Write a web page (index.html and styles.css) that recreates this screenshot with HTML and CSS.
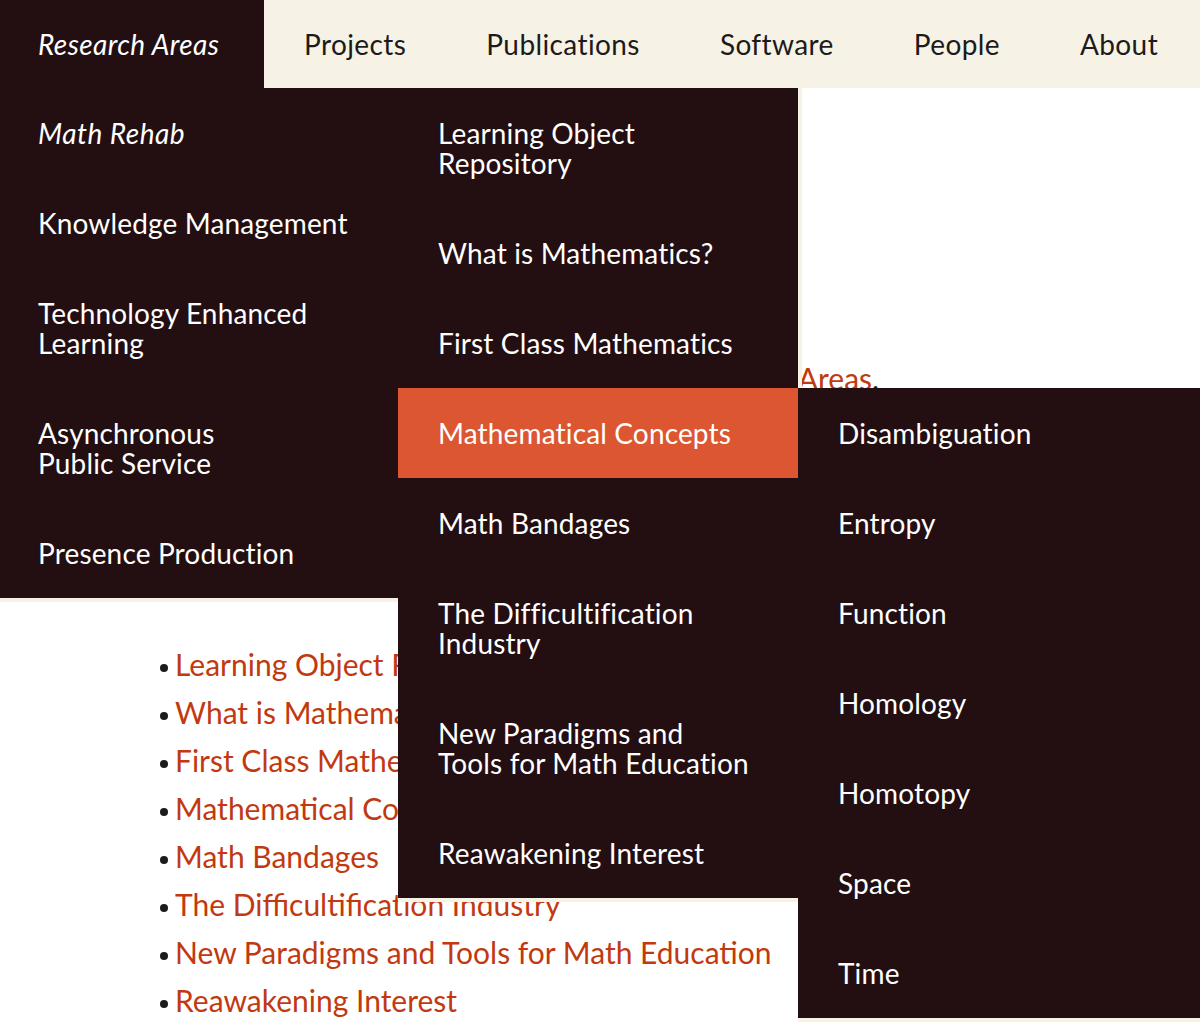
FILE: index.html
```html
<!DOCTYPE html>
<html lang="en">
<head>
<meta charset="utf-8">
<title>Math Rehab</title>
<link rel="stylesheet" href="styles.css">
</head>
<body>
<header class="site-header">
  <nav class="main-nav">
    <ul class="nav-list">
      <li class="nav-item is-open">
        <a class="nav-link current" href="#">Research Areas</a>
        <ul class="dropdown level-1">
          <li class="dd-item is-open">
            <a class="dd-link current" href="#">Math Rehab</a>
            <ul class="dropdown level-2">
              <li class="dd-item"><a class="dd-link" href="#">Learning Object<br>Repository</a></li>
              <li class="dd-item"><a class="dd-link" href="#">What is Mathematics?</a></li>
              <li class="dd-item"><a class="dd-link" href="#">First Class Mathematics</a></li>
              <li class="dd-item is-open">
                <a class="dd-link hover" href="#">Mathematical Concepts</a>
                <ul class="dropdown level-3">
                  <li class="dd-item"><a class="dd-link" href="#">Disambiguation</a></li>
                  <li class="dd-item"><a class="dd-link" href="#">Entropy</a></li>
                  <li class="dd-item"><a class="dd-link" href="#">Function</a></li>
                  <li class="dd-item"><a class="dd-link" href="#">Homology</a></li>
                  <li class="dd-item"><a class="dd-link" href="#">Homotopy</a></li>
                  <li class="dd-item"><a class="dd-link" href="#">Space</a></li>
                  <li class="dd-item"><a class="dd-link" href="#">Time</a></li>
                </ul>
              </li>
              <li class="dd-item"><a class="dd-link" href="#">Math Bandages</a></li>
              <li class="dd-item"><a class="dd-link" href="#">The Difficultification<br>Industry</a></li>
              <li class="dd-item"><a class="dd-link" href="#">New Paradigms and<br>Tools for Math Education</a></li>
              <li class="dd-item"><a class="dd-link" href="#">Reawakening Interest</a></li>
            </ul>
          </li>
          <li class="dd-item"><a class="dd-link" href="#">Knowledge Management</a></li>
          <li class="dd-item"><a class="dd-link" href="#">Technology Enhanced<br>Learning</a></li>
          <li class="dd-item"><a class="dd-link" href="#">Asynchronous<br>Public Service</a></li>
          <li class="dd-item"><a class="dd-link" href="#">Presence Production</a></li>
        </ul>
      </li>
      <li class="nav-item"><a class="nav-link" href="#">Projects</a></li>
      <li class="nav-item"><a class="nav-link" href="#">Publications</a></li>
      <li class="nav-item"><a class="nav-link" href="#">Software</a></li>
      <li class="nav-item"><a class="nav-link" href="#">People</a></li>
      <li class="nav-item"><a class="nav-link" href="#">About</a></li>
    </ul>
  </nav>
</header>
<main class="content">
  <h1 class="page-title">Math Rehab</h1>
  <p class="intro">Math Rehab is one of our <a href="#">Research</a> <a href="#">Areas</a>.</p>
  <ul class="topic-list">
    <li><a href="#">Learning Object Repository</a></li>
    <li><a href="#">What is Mathematics?</a></li>
    <li><a href="#">First Class Mathematics</a></li>
    <li><a href="#">Mathematical Concepts</a></li>
    <li><a href="#">Math Bandages</a></li>
    <li><a href="#">The Difficultification Industry</a></li>
    <li><a href="#">New Paradigms and Tools for Math Education</a></li>
    <li><a href="#">Reawakening Interest</a></li>
  </ul>
</main>
</body>
</html>
```
FILE: styles.css
```css
* { box-sizing: border-box; }
html, body {
  margin: 0;
  padding: 0;
  background: #ffffff;
}
body {
  font-family: "Lato", "Noto Sans", sans-serif;
  font-size: 28px;
  color: #1d1a1a;
  overflow: hidden;
  height: 1026px;
}
a { text-decoration: none; }
ul { list-style: none; margin: 0; padding: 0; }

.site-header {
  background: #f6f3e6;
  height: 88px;
  position: relative;
  z-index: 10;
}
.nav-list {
  display: flex;
  height: 88px;
}
.nav-item {
  position: relative;
}
.nav-link {
  display: block;
  height: 88px;
  line-height: 88px;
  padding: 0 40px 0 40px;
  color: #1d1a1a;
  white-space: nowrap;
  letter-spacing: 0.4px;
}
.nav-link.current {
  background: #230f12;
  color: #ffffff;
  font-style: italic;
  padding-left: 38px;
  width: 264px;
  letter-spacing: 0.4px;
}

.dropdown {
  position: absolute;
  background: #230f12;
  width: 400px;
  box-shadow: 4px 0 0 #f6f3e6, 0 4px 0 #f6f3e6;
}
.dropdown.level-1 {
  top: 88px;
  left: 0;
  width: 398px;
}
.dropdown.level-2,
.dropdown.level-3 {
  top: 0;
  left: 100%;
}
.dropdown.level-2 { width: 400px; }
.dropdown.level-3 { width: 402px; }

.dd-item { position: relative; }
.dd-link {
  display: block;
  padding: 30px 40px;
  line-height: 30px;
  color: #ffffff;
  white-space: nowrap;
  letter-spacing: 0.15px;
}
.level-1 > .dd-item > .dd-link { padding-left: 38px; }
.dd-link.current { font-style: italic; letter-spacing: 0.5px; }
.dd-link.hover { background: #dc5631; }

.content {
  padding: 0 0 0 160px;
  font-size: 30px;
}
.page-title {
  margin: 0;
  padding-top: 150px;
  font-size: 40px;
  line-height: 60px;
  font-weight: 700;
}
.intro {
  margin: 56px 0 0 0;
  line-height: 48px;
  padding-left: 174px;
  white-space: nowrap;
}
.content a { color: #c2390f; }
.topic-list {
  margin-top: 238px;
}
.topic-list li {
  line-height: 48px;
  white-space: nowrap;
}
.topic-list li::before {
  content: "";
  display: inline-block;
  width: 8px;
  height: 8px;
  border-radius: 50%;
  background: #1d1a1a;
  vertical-align: middle;
  margin: 0 7px 1px 0;
}
```
